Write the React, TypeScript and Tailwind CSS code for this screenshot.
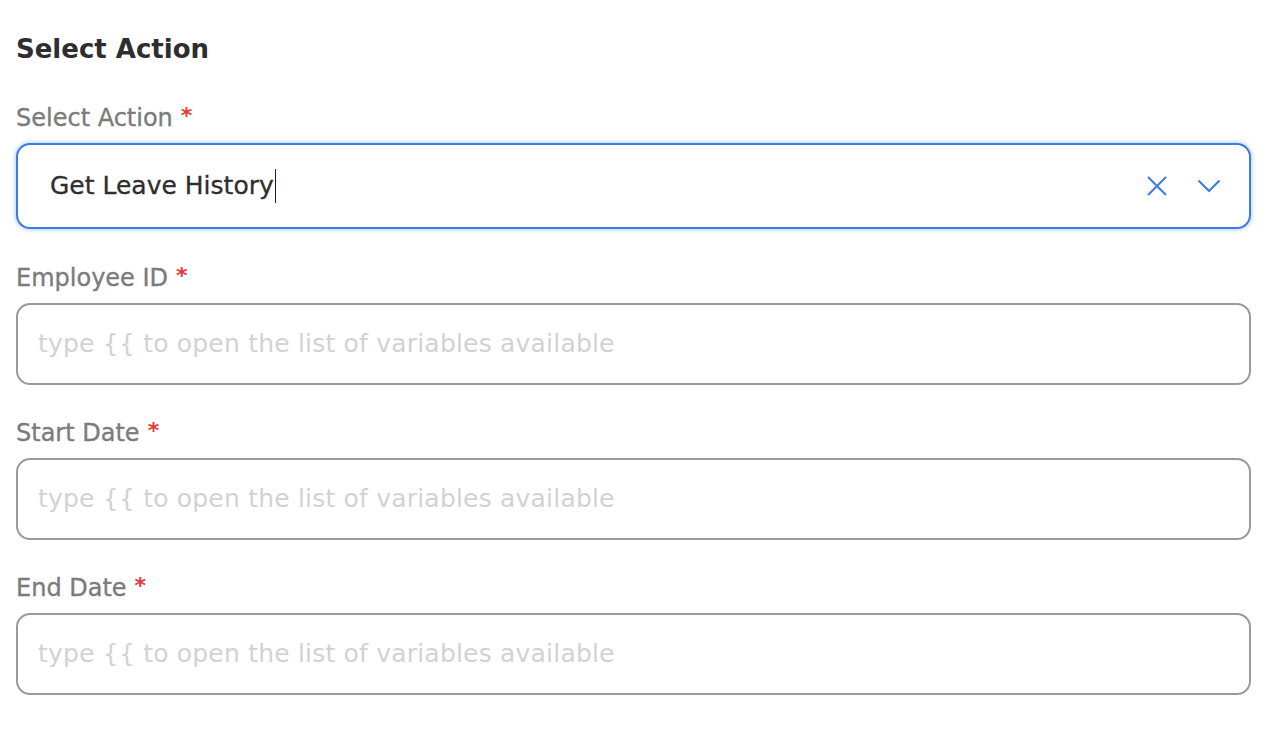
import React from "react";

function Label({ text }: { text: string }) {
  return (
    <div className="text-[24px] text-[#7b7b7b] leading-none h-[26px] flex items-center [-webkit-text-stroke:0.35px_#7b7b7b]">
      <span>{text}</span>
      <span className="ml-[8px] text-[#e5393b] text-[22px] font-bold [-webkit-text-stroke:0px] -mt-[4px]">*</span>
    </div>
  );
}

function TextField({ label }: { label: string }) {
  return (
    <div className="flex flex-col gap-[12px]">
      <Label text={label} />
      <div className="h-[82px] rounded-[14px] border-2 border-[#9a9a9a] flex items-center pl-[20px] bg-white">
        <span className="text-[25px] tracking-[0.2px] text-[#d2d2d2]">type {"{{"} to open the list of variables available</span>
      </div>
    </div>
  );
}

export default function App() {
  return (
    <div className="w-[1284px] h-[730px] bg-white pl-[16px] pr-[33px] pt-[30px]" style={{ fontFamily: "'DejaVu Sans', sans-serif" }}>
      <h1 className="text-[26px] font-bold text-[#2e2e2e] leading-none h-[38px] flex items-center">Select Action</h1>
      <div className="mt-[37px] flex flex-col gap-[12px]">
        <Label text="Select Action" />
        <div className="h-[86px] rounded-[14px] border-2 border-[#3b7be8] shadow-[0_0_4px_1px_rgba(59,123,232,0.35)] flex items-center pl-[32px] pr-[28px] bg-white">
          <span className="text-[25px] text-[#2e2e2e] [-webkit-text-stroke:0.3px_#2e2e2e]">Get Leave History</span>
          <span className="w-[1.5px] h-[34px] bg-[#222] ml-[1px]" />
          <div className="flex-1" />
          <svg width="22" height="22" viewBox="0 0 22 22" className="mr-[29px]">
            <path d="M2 2 L20 20 M20 2 L2 20" stroke="#3b7be8" strokeWidth="2" fill="none" />
          </svg>
          <svg width="24" height="14" viewBox="0 0 24 14">
            <path d="M1.5 1.5 L12 12 L22.5 1.5" stroke="#3b7be8" strokeWidth="2" fill="none" />
          </svg>
        </div>
      </div>
      <div className="mt-[36px] flex flex-col gap-[35px]">
        <TextField label="Employee ID" />
        <TextField label="Start Date" />
        <TextField label="End Date" />
      </div>
    </div>
  );
}
